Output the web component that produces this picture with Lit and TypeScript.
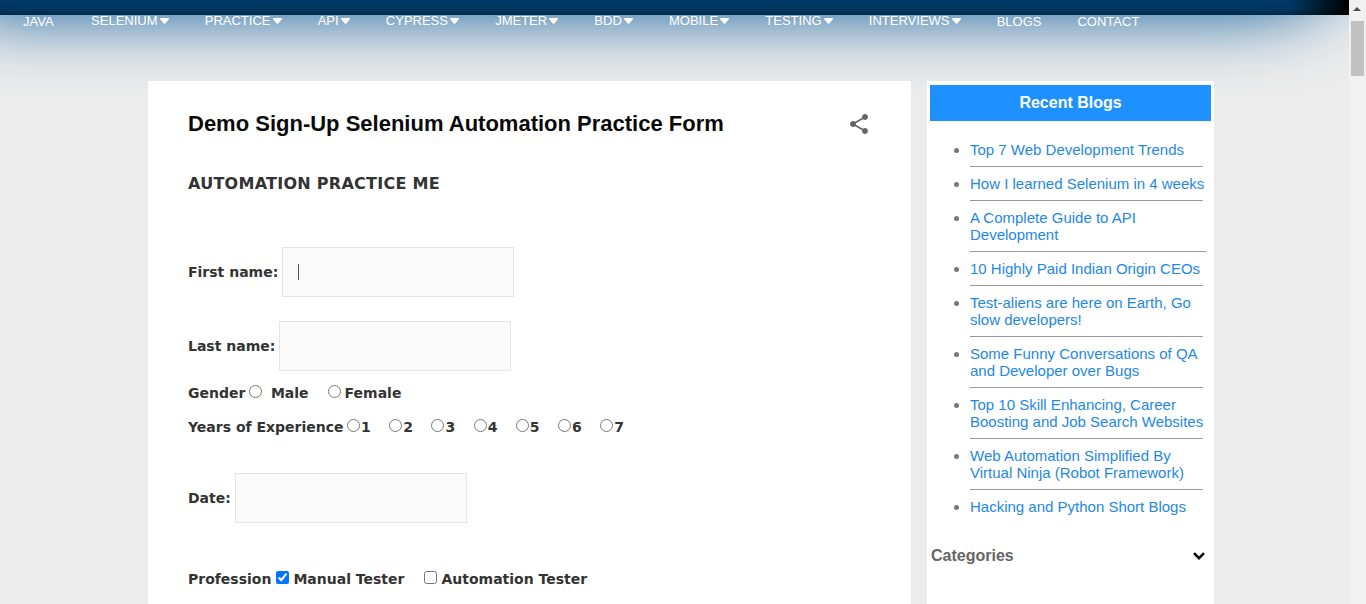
import {css, html, LitElement} from "lit";
import {customElement} from "lit/decorators.js";

const MENU = [
	{label: "JAVA", caret: false},
	{label: "SELENIUM", caret: true},
	{label: "PRACTICE", caret: true},
	{label: "API", caret: true},
	{label: "CYPRESS", caret: true},
	{label: "JMETER", caret: true},
	{label: "BDD", caret: true},
	{label: "MOBILE", caret: true},
	{label: "TESTING", caret: true},
	{label: "INTERVIEWS", caret: true},
	{label: "BLOGS", caret: false},
	{label: "CONTACT", caret: false},
];

// line breaks kept as in the reference
const BLOGS = [
	"Top 7 Web Development Trends",
	"How I learned Selenium in 4 weeks",
	"A Complete Guide to API\nDevelopment",
	"10 Highly Paid Indian Origin CEOs",
	"Test-aliens are here on Earth, Go\nslow developers!",
	"Some Funny Conversations of QA\nand Developer over Bugs",
	"Top 10 Skill Enhancing, Career\nBoosting and Job Search Websites",
	"Web Automation Simplified By\nVirtual Ninja (Robot Framework)",
	"Hacking and Python Short Blogs",
];

@customElement("app-root")
export default class AppRoot extends LitElement {
	static styles = css`
		:host {
			display: flex;
			height: 604px;
			overflow: hidden;
			font-family: "Liberation Sans", Arial, sans-serif;
		}

		.page {
			flex: 1;
			min-width: 0;
			background: #ececec;
			isolation: isolate;
		}

		.bar {
			position: relative;
			height: 15px;
			background:
				linear-gradient(90deg, transparent 95.500%, #000 100%),
				linear-gradient(#013a69, #01375f 60%, #002a4a);
		}

		.bar::after {
			content: "";
			position: absolute;
			left: -30px;
			right: 10px;
			bottom: 0;
			height: 100px;
			border-bottom-right-radius: 110px 45px;
			box-shadow: 0 0 70px #0c5c9c;
			z-index: -1;
		}

		nav {
			display: flex;
			height: 66px;
			padding-left: 5px;
			box-sizing: border-box;
		}

		.item {
			display: flex;
			gap: 2.200px;
			height: 13px;
			padding: 0 18px;
			align-items: center;
			margin-top: -1px;
			color: #fff;
			font-size: 13px;
			line-height: 13px;
			white-space: nowrap;
		}

		.item.plain {
			margin-top: 0;
		}

		.item:first-child {
			margin-right: 1.500px;
		}

		.item svg {
			width: 9px;
			height: 6px;
			fill: #fff;
		}

		.columns {
			display: flex;
			gap: 16px;
			padding-left: 148px;
		}

		main {
			width: 763px;
			box-sizing: border-box;
			padding: 30px 40px 60px;
			background: #fff;
			font-family: "DejaVu Sans", Verdana, sans-serif;
			font-size: 14px;
			font-weight: bold;
			color: #333;
		}

		.title-row {
			display: flex;
			justify-content: space-between;
			align-items: center;
			height: 26px;
		}

		h1 {
			margin: 0;
			font-family: "Liberation Sans", Arial, sans-serif;
			font-size: 22px;
			line-height: 26px;
			color: #0a0a0a;
		}

		.title-row svg {
			width: 24px;
			height: 24px;
			fill: #666;
			margin-top: -1px;
		}

		h2 {
			margin: 38px 0 54px;
			font-size: 16px;
			line-height: 18px;
			letter-spacing: 0.270px;
			color: #333;
		}

		.field {
			display: flex;
			align-items: center;
			gap: 4px;
			height: 50px;
			margin-bottom: 24px;
		}

		.field input {
			width: 232px;
			height: 50px;
			box-sizing: border-box;
			border: 1px solid #e4e4e4;
			background: #fbfbfb;
			padding: 0;
		}

		.field.first {
			position: relative;
		}

		.cursor {
			position: absolute;
			left: 110px;
			top: 17px;
			width: 1px;
			height: 16px;
			background: #555;
		}

		.line {
			display: flex;
			align-items: center;
			height: 18px;
			line-height: 18px;
		}

		.gender {
			margin-top: -11px;
		}

		.years {
			margin-top: 16px;
			margin-bottom: 37px;
		}

		.date {
			margin-bottom: 47px;
		}

		input[type="radio"],
		input[type="checkbox"] {
			width: 13px;
			height: 13px;
			margin: -4px 1px 0 0;
			flex: none;
		}

		.opt {
			display: flex;
			align-items: center;
		}

		.gender .lead {
			margin-right: 3.500px;
		}

		.gender .male {
			margin-right: 19px;
		}

		.gender .male input {
			margin-right: 9px;
		}

		.gender .female input {
			margin-right: 4px;
		}

		.years .lead {
			margin-right: 3.500px;
		}

		.years .opt {
			width: 42.200px;
		}

		.profession .lead {
			margin-right: 5px;
		}

		.profession input {
			margin-right: 4px;
		}

		.profession .manual {
			margin-right: 20px;
		}

		aside {
			width: 287px;
			box-sizing: border-box;
			height: 560px;
			padding: 4px 3px 0;
			background: #fff;
		}

		.recent {
			height: 36px;
			background: #1e90ff;
			color: #fff;
			font-size: 16px;
			font-weight: bold;
			line-height: 36px;
			text-align: center;
		}

		ul {
			margin: 0;
			padding: 20px 0 0 40px;
			color: #777;
			font-size: 15px;
			line-height: 17px;
		}

		li {
			width: 233px;
			margin-bottom: 8px;
			padding-bottom: 8px;
			border-bottom: 1px solid #999;
		}

		li:nth-child(3) {
			width: 236px;
		}

		li:last-child {
			border-bottom: 0;
		}

		li a {
			color: #1e88e5;
			text-decoration: none;
			white-space: pre;
		}

		.categories {
			display: flex;
			justify-content: space-between;
			align-items: center;
			padding: 15px 6px 0 1px;
			color: #666;
			font-size: 16px;
			font-weight: bold;
			line-height: 20px;
		}

		.categories svg {
			width: 12px;
			height: 8px;
			fill: none;
			stroke: #000;
			stroke-width: 2.400;
		}

		.scrollbar {
			flex: none;
			position: relative;
			width: 17px;
			background: #f1f1f1;
		}

		.arrow {
			position: absolute;
			left: 4px;
			top: 7px;
			width: 0;
			height: 0;
			border-left: 4px solid transparent;
			border-right: 4px solid transparent;
			border-bottom: 4px solid #505050;
		}

		.thumb {
			position: absolute;
			left: 2px;
			top: 21px;
			width: 13px;
			height: 55px;
			background: #c1c1c1;
		}
	`;

	render() {
		return html`
			<div class="page">
				<div class="bar"></div>
				<nav>
					${MENU.map((m) => html`
						<a class="item ${m.caret ? "" : "plain"}">
							${m.label}
							${m.caret ? html`<svg viewBox="0 0 9 6"><path d="M1 0h7c.9 0 1.300 1 .7 1.600l-3.500 3.900c-.4.400-1 .400-1.400 0L.3 1.600C-.3 1 .1 0 1 0z"/></svg>` : ""}
						</a>
					`)}
				</nav>
				<div class="columns">
					<main>
						<div class="title-row">
							<h1>Demo Sign-Up Selenium Automation Practice Form</h1>
							<svg viewBox="0 0 24 24"><path d="M18 16.080c-.76 0-1.440.300-1.960.770L8.910 12.700c.050-.230.090-.460.090-.700s-.040-.470-.090-.700l7.050-4.110c.540.500 1.250.810 2.040.810 1.660 0 3-1.340 3-3s-1.340-3-3-3-3 1.340-3 3c0 .240.040.470.090.700L8.040 9.810C7.500 9.310 6.790 9 6 9c-1.660 0-3 1.340-3 3s1.340 3 3 3c.790 0 1.500-.310 2.040-.810l7.120 4.160c-.050.210-.080.430-.080.650 0 1.610 1.310 2.920 2.920 2.920s2.920-1.310 2.920-2.920-1.310-2.920-2.920-2.920z"/></svg>
						</div>
						<h2>AUTOMATION PRACTICE ME</h2>
						<div class="field first">
							<label>First name:</label>
							<input type="text" />
							<span class="cursor"></span>
						</div>
						<div class="field">
							<label>Last name:</label>
							<input type="text" />
						</div>
						<div class="line gender">
							<span class="lead">Gender</span>
							<label class="opt male"><input type="radio" name="g" />Male</label>
							<label class="opt female"><input type="radio" name="g" />Female</label>
						</div>
						<div class="line years">
							<span class="lead">Years of Experience</span>
							${[1, 2, 3, 4, 5, 6, 7].map((n) => html`<label class="opt"><input type="radio" name="y" />${n}</label>`)}
						</div>
						<div class="field date">
							<label>Date:</label>
							<input type="text" />
						</div>
						<div class="line profession">
							<span class="lead">Profession</span>
							<label class="opt manual"><input type="checkbox" checked />Manual Tester</label>
							<label class="opt"><input type="checkbox" />Automation Tester</label>
						</div>
					</main>
					<aside>
						<div class="recent">Recent Blogs</div>
						<ul>
							${BLOGS.map((b) => html`<li><a>${b}</a></li>`)}
						</ul>
						<div class="categories">
							Categories
							<svg viewBox="0 0 12 8"><path d="M1 1.200l5 5 5-5"/></svg>
						</div>
					</aside>
				</div>
			</div>
			<div class="scrollbar">
				<div class="arrow"></div>
				<div class="thumb"></div>
			</div>
		`;
	}
}

declare global {
	interface HTMLElementTagNameMap {
		"app-root": AppRoot;
	}
}
